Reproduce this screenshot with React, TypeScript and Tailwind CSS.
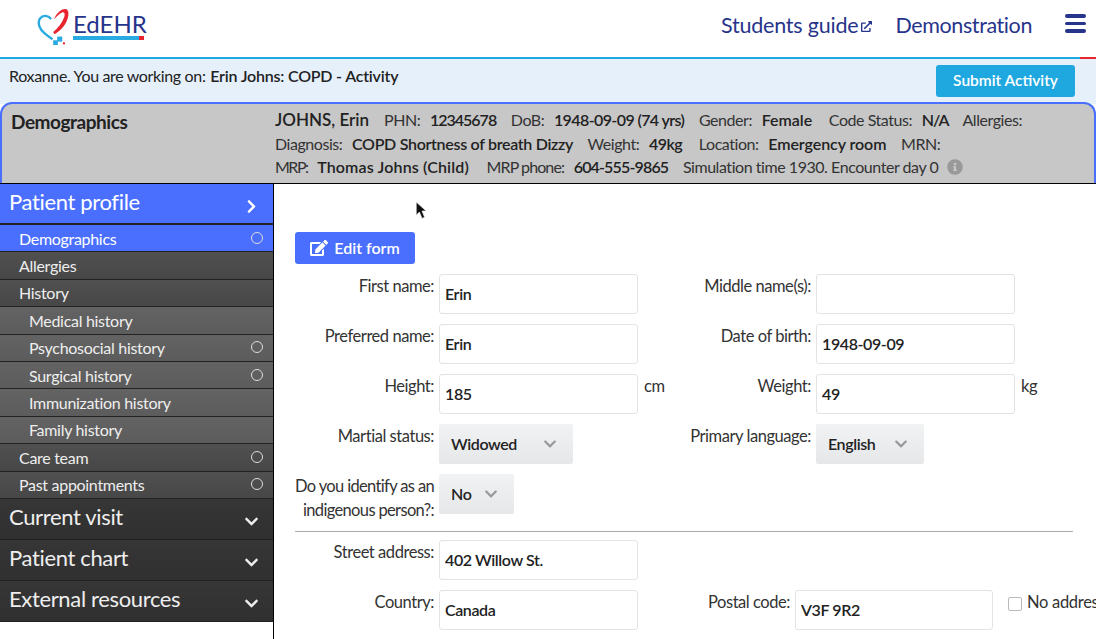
import type { ReactNode } from 'react';
import { FaChevronDown, FaChevronRight, FaEdit, FaExternalLinkAlt, FaInfoCircle } from 'react-icons/fa';

const FONT = "font-['Lato','Noto_Sans',sans-serif]";

interface SideItem {
    label: string;
    sub?: boolean;
    dot?: boolean;
    active?: boolean;
}

const items: SideItem[] = [
    { label: 'Demographics', dot: true, active: true },
    { label: 'Allergies' },
    { label: 'History' },
    { label: 'Medical history', sub: true },
    { label: 'Psychosocial history', sub: true, dot: true },
    { label: 'Surgical history', sub: true, dot: true },
    { label: 'Immunization history', sub: true },
    { label: 'Family history', sub: true },
    { label: 'Care team', dot: true },
    { label: 'Past appointments', dot: true },
];

function rowColor(it: SideItem) {
    if (it.active) return 'bg-[#4a6fff] text-white';
    if (it.sub) return 'bg-gradient-to-b from-[#636363] to-[#5c5c5c] text-[#eee]';
    return 'bg-gradient-to-b from-[#505050] to-[#474747] text-[#eee]';
}

function Logo() {
    return (
        <div className="ml-[37px] flex items-start">
            <svg width="32" height="37" viewBox="110 25 95 110" className="mt-[8px]">
                <path d="M152 58 C143 47 128 44 119 56 C110 70 118 88 132 100 C140 107 148 113 156 118" fill="none" stroke="#29abe2" strokeWidth="7" />
                <path d="M160 60 C166 42 182 27 195 28 C206 30 205 48 199 62 C193 78 178 94 162 103 L158 96 C172 86 184 70 190 54 C194 44 192 37 186 38 C176 42 167 52 160 60 Z" fill="#e8242f" />
                <rect x="170" y="110" width="15" height="15" fill="#29abe2" />
                <rect x="158" y="121" width="14" height="14" fill="#29abe2" />
                <rect x="187" y="127" width="6" height="6" fill="#e8242f" />
            </svg>
            <div className="ml-[4px] mt-[11px] flex flex-col">
                <span className="text-[24px] leading-[25px] text-[#27348b]">EdEHR</span>
                <div className="flex h-[4px]">
                    <div className="w-[66px] bg-[#29abe2]" />
                    <div className="w-[5px] bg-[#e8242f]" />
                </div>
            </div>
        </div>
    );
}

function Field({ label, value, labelW = 139, inputW = 199 }: { label: string; value: string; labelW?: number; inputW?: number }) {
    return (
        <div className="flex items-start">
            <label className="whitespace-nowrap text-right text-[16.500px] leading-[24px] tracking-[-0.45px] text-[#333]" style={{ width: labelW }}>{label}</label>
            <input
                readOnly
                value={value}
                className="ml-[5px] h-[40px] rounded-[3px] border border-[#e3e3e3] bg-white px-[5px] pb-[2px] text-[16px] font-semibold tracking-[-0.4px] text-[#222]"
                style={{ width: inputW }}
            />
        </div>
    );
}

function Select({ label, value, w }: { label: ReactNode; value: string; w: number }) {
    return (
        <div className="flex items-start">
            <label className="w-[139px] whitespace-nowrap text-right text-[16.500px] leading-[24px] tracking-[-0.45px] text-[#333]">{label}</label>
            <div
                className="ml-[5px] flex h-[40px] items-center justify-between rounded-[2px] bg-gradient-to-b from-[#f1f2f3] to-[#e6e7e8] pb-[1px] pl-[12px] pr-[16px] text-[16px] font-semibold tracking-[-0.4px] text-[#222]"
                style={{ width: w }}
            >
                {value}
                <FaChevronDown className="text-[14px] text-[#999]" />
            </div>
        </div>
    );
}

function Val({ children, cls = 'mr-[11px] tracking-[-0.5px]' }: { children: ReactNode; cls?: string }) {
    return <b className={`ml-[6px] font-semibold text-[#222] ${cls}`}>{children}</b>;
}

export default function App() {
    return (
        <div className={`h-[639px] w-[1096px] overflow-hidden bg-white ${FONT}`}>
            <header className="flex h-[57px] items-start justify-between">
                <Logo />
                <nav className="flex items-center pr-[10px] pt-[12px] text-[21.500px] leading-[27px] tracking-[-0.4px] text-[#27348b]">
                    <span className="tracking-[-0.2px]">Students guide</span>
                    <FaExternalLinkAlt className="ml-[2px] mt-[2px] text-[11px]" />
                    <span className="ml-[24px]">Demonstration</span>
                    <div className="ml-[33px] flex w-[21px] -translate-y-[2px] flex-col gap-[4px]">
                        <span className="h-[3.500px] rounded-sm bg-[#27348b]" />
                        <span className="h-[3.500px] rounded-sm bg-[#27348b]" />
                        <span className="h-[3.500px] rounded-sm bg-[#27348b]" />
                    </div>
                </nav>
            </header>
            <div className="flex h-[2px]">
                <div className="flex-1 bg-[#1fa8e0]" />
                <div className="w-[16px] bg-[#e8242f]" />
            </div>
            <div className="flex h-[45px] items-start justify-between bg-[#e6f0fb] pl-[9px] pr-[21px]">
                <p className="pt-[6px] text-[16px] leading-[22px] tracking-[-0.35px] text-[#222]">
                    Roxanne. You are working on: <b className="ml-[1px] font-semibold tracking-[-0.2px]">Erin Johns: COPD - Activity</b>
                </p>
                <button className="mt-[6px] h-[32px] w-[139px] rounded-[3px] bg-[#1fa8e0] text-[15.500px] font-semibold text-white">Submit Activity</button>
            </div>
            <section className="-mt-[2px] flex h-[81px] rounded-t-[12px] border-x-2 border-t-2 border-[#4a6fff] border-b-0 bg-[#c7c7c7] text-[16px] tracking-[-0.45px] text-[#333]">
                <h2 className="w-[273px] pl-[9px] pt-[5px] text-[19px] font-bold leading-[26px] text-[#222]">Demographics</h2>
                <div className="flex flex-col whitespace-nowrap pt-[4px] leading-[23.500px]">
                    <div>
                        <b className="mr-[15px] text-[17px] font-semibold tracking-normal text-[#222]">JOHNS, Erin</b>PHN: <Val cls="mr-[11px] tracking-[-1px]">12345678</Val> DoB: <Val cls="mr-[11px] tracking-[-0.6px]">1948-09-09 (74 yrs)</Val> Gender: <Val cls="mr-[13px] tracking-[0px]">Female</Val> Code Status: <Val cls="mr-[11px] tracking-[-1px]">N/A</Val> Allergies:
                    </div>
                    <div>
                        Diagnosis: <Val cls="mr-[11px] tracking-[-0.3px]">COPD Shortness of breath Dizzy</Val> Weight: <Val cls="mr-[13px] tracking-[-0.5px]">49kg</Val> Location: <Val cls="mr-[11px] tracking-[-0.07px]">Emergency room</Val> MRN:
                    </div>
                    <div className="flex items-center">
                        <span>
                            <span className="tracking-[-1.500px]">MRP:</span> <Val cls="mr-[14px] tracking-[0.15px]">Thomas Johns (Child)</Val> <span className="tracking-[-0.9px]">MRP phone:</span> <Val cls="mr-[11px] tracking-[-0.85px]">604-555-9865</Val> Simulation time 1930. Encounter day 0
                        </span>
                        <FaInfoCircle className="ml-[9px] text-[16px] text-[#999]" />
                    </div>
                </div>
            </section>
            <div className="flex h-[456px] border-t border-black">
                <aside className="w-[274px] shrink-0 border-r border-black">
                    <div className="flex h-[41px] items-center justify-between border-b-2 border-[#222] bg-[#4a6fff] pb-[5px] pl-[9px] pr-[14px] text-[22px] tracking-[-0.35px] text-white">
                        Patient profile
                        <FaChevronRight className="mt-[11px] text-[15px]" />
                    </div>
                    {items.map(it => (
                        <div
                            key={it.label}
                            className={`flex h-[27.400px] items-center justify-between border-b border-[#222] pr-[10px] pt-[1px] text-[16px] tracking-[-0.3px] ${it.sub ? 'pl-[29px]' : 'pl-[19px]'} ${rowColor(it)}`}
                        >
                            {it.label}
                            {it.dot && <span className="-mt-[2px] h-[12px] w-[12px] rounded-full border border-[#ddd]" />}
                        </div>
                    ))}
                    {['Current visit', 'Patient chart', 'External resources'].map(s => (
                        <div key={s} className="flex h-[41px] items-center justify-between border-b border-[#222] bg-gradient-to-b from-[#363636] to-[#303030] pb-[4px] pl-[9px] pr-[14px] text-[22px] tracking-[-0.35px] text-[#eee]">
                            {s}
                            <FaChevronDown className="mt-[10px] text-[15px]" />
                        </div>
                    ))}
                </aside>
                <main className="relative flex-1 border-r border-black pl-[21px] pt-[48px]">
                    <svg className="absolute left-[141px] top-[17px]" width="13" height="19" viewBox="0 0 12 18">
                        <path d="M1 1 L1 13.500 L4 10.500 L6.500 16.500 L9 15.500 L6.500 9.500 L10.500 9.500 Z" fill="#111" stroke="#fff" strokeWidth="0.600" />
                    </svg>
                    <button className="flex h-[32px] w-[120px] items-center justify-center gap-[6px] rounded-[3px] bg-[#4a6fff] text-[16px] font-semibold text-white">
                        <FaEdit className="text-[18px]" />
                        Edit form
                    </button>
                    <div className="mt-[10px] flex flex-col gap-[10px]">
                        <div className="flex"><div className="w-[377px]"><Field label="First name:" value="Erin" /></div><Field label="Middle name(s):" value="" /></div>
                        <div className="flex"><div className="w-[377px]"><Field label="Preferred name:" value="Erin" /></div><Field label="Date of birth:" value="1948-09-09" /></div>
                        <div className="flex">
                            <div className="flex w-[377px] items-start"><Field label="Height:" value="185" /><span className="ml-[6px] text-[16.500px] leading-[24px] tracking-[-0.45px] text-[#333]">cm</span></div>
                            <div className="flex items-start"><Field label="Weight:" value="49" /><span className="ml-[6px] text-[16.500px] leading-[24px] tracking-[-0.45px] text-[#333]">kg</span></div>
                        </div>
                        <div className="flex"><div className="w-[377px]"><Select label="Martial status:" value="Widowed" w={134} /></div><Select label="Primary language:" value="English" w={108} /></div>
                        <div className="flex"><Select label={<span className="tracking-[-0.65px]">Do you identify as an<br />indigenous person?:</span>} value="No" w={75} /></div>
                    </div>
                    <hr className="mt-[9px] w-[778px] border-t border-[#aaa]" />
                    <div className="mt-[8px] flex flex-col gap-[10px]">
                        <Field label="Street address:" value="402 Willow St." />
                        <div className="flex">
                            <div className="w-[377px]"><Field label="Country:" value="Canada" /></div>
                            <Field label="Postal code:" value="V3F 9R2" labelW={118} inputW={198} />
                            <div className="ml-[15px] flex items-start whitespace-nowrap text-[16.500px] leading-[24px] tracking-[-0.3px] text-[#333]">
                                <span className="mr-[5px] mt-[7px] h-[14px] w-[14px] rounded-[2px] border border-[#bbb]" />
                                No address
                            </div>
                        </div>
                    </div>
                </main>
            </div>
        </div>
    );
}
